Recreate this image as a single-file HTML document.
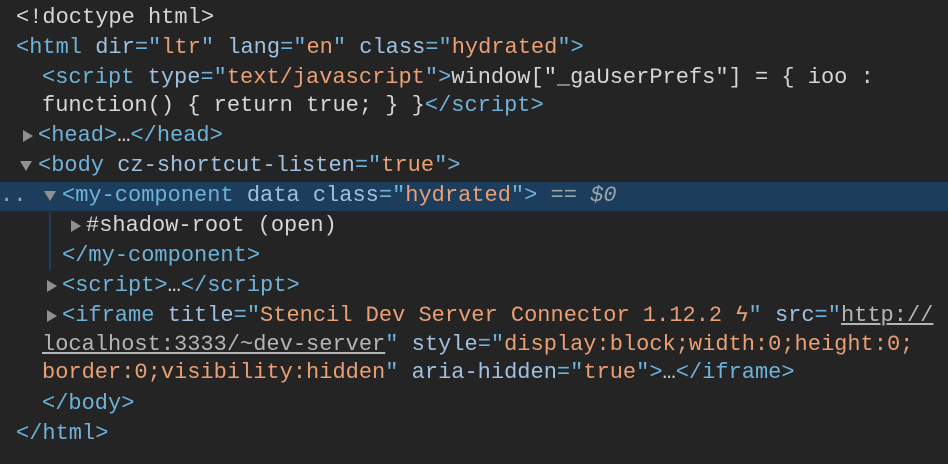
<!DOCTYPE html>
<html><head><style>
body{margin:0;width:948px;height:464px;background:#242424;overflow:hidden;position:relative;font-family:"Liberation Mono",monospace;font-size:22px;color:#d6d6d6}
.l{position:absolute;white-space:pre;line-height:30px;height:30px}
.t{color:#6fb2d9}.a{color:#9fc0e0}.v{color:#eb9f74}.c{color:#9aa4ad;font-style:italic}
.u{text-decoration:underline;color:#b5b5b5}
.tri{position:absolute;width:0;height:0;border-top:6px solid transparent;border-bottom:6px solid transparent;border-left:10px solid #909090}
.trd{position:absolute;width:0;height:0;border-left:6px solid transparent;border-right:6px solid transparent;border-top:10px solid #909090}
</style></head><body>
<div style="position:absolute;left:0;top:182px;width:948px;height:29px;background:#1c3d5c"></div>
<div style="position:absolute;left:49px;top:212px;width:2px;height:58px;background:#1c3d5c"></div>
<div class="l" style="left:16px;top:3px">&lt;!doctype html&gt;</div>
<div class="l" style="left:16px;top:33px"><span class="t">&lt;html</span> <span class="a">dir</span><span class="t">="</span><span class="v">ltr</span><span class="t">"</span> <span class="a">lang</span><span class="t">="</span><span class="v">en</span><span class="t">"</span> <span class="a">class</span><span class="t">="</span><span class="v">hydrated</span><span class="t">"&gt;</span></div>
<div class="l" style="left:42px;top:63px"><span class="t">&lt;script</span> <span class="a">type</span><span class="t">="</span><span class="v">text/javascript</span><span class="t">"&gt;</span>window["_gaUserPrefs"] = { ioo :</div>
<div class="l" style="left:42px;top:91px">function() { return true; } }<span class="t">&lt;/script&gt;</span></div>
<div class="tri" style="left:23px;top:130px"></div>
<div class="l" style="left:38px;top:121px"><span class="t">&lt;head&gt;</span>…<span class="t">&lt;/head&gt;</span></div>
<div class="trd" style="left:20px;top:161px"></div>
<div class="l" style="left:38px;top:151px"><span class="t">&lt;body</span> <span class="a">cz-shortcut-listen</span><span class="t">="</span><span class="v">true</span><span class="t">"&gt;</span></div>
<div class="l" style="left:0px;top:181px;color:#9aa4ad">..</div>
<div class="trd" style="left:44px;top:191px"></div>
<div class="l" style="left:62px;top:181px"><span class="t">&lt;my-component</span> <span class="a">data class</span><span class="t">="</span><span class="v">hydrated</span><span class="t">"&gt;</span> <span class="c">== $0</span></div>
<div class="tri" style="left:71px;top:220px"></div>
<div class="l" style="left:86px;top:211px">#shadow-root (open)</div>
<div class="l" style="left:62px;top:241px"><span class="t">&lt;/my-component&gt;</span></div>
<div class="tri" style="left:47px;top:280px"></div>
<div class="l" style="left:62px;top:271px"><span class="t">&lt;script&gt;</span>…<span class="t">&lt;/script&gt;</span></div>
<div class="tri" style="left:47px;top:310px"></div>
<div class="l" style="left:62px;top:301px"><span class="t">&lt;iframe</span> <span class="a">title</span><span class="t">="</span><span class="v">Stencil Dev Server Connector 1.12.2 ϟ</span><span class="t">"</span> <span class="a">src</span><span class="t">="</span><span class="u">http://</span></div>
<div class="l" style="left:42px;top:330px"><span class="u">localhost:3333/~dev-server</span><span class="t">"</span> <span class="a">style</span><span class="t">="</span><span class="v">display:block;width:0;height:0;</span></div>
<div class="l" style="left:42px;top:358px"><span class="v">border:0;visibility:hidden</span><span class="t">"</span> <span class="a">aria-hidden</span><span class="t">="</span><span class="v">true</span><span class="t">"&gt;</span>…<span class="t">&lt;/iframe&gt;</span></div>
<div class="l" style="left:42px;top:389px"><span class="t">&lt;/body&gt;</span></div>
<div class="l" style="left:16px;top:419px"><span class="t">&lt;/html&gt;</span></div>
</body></html>
